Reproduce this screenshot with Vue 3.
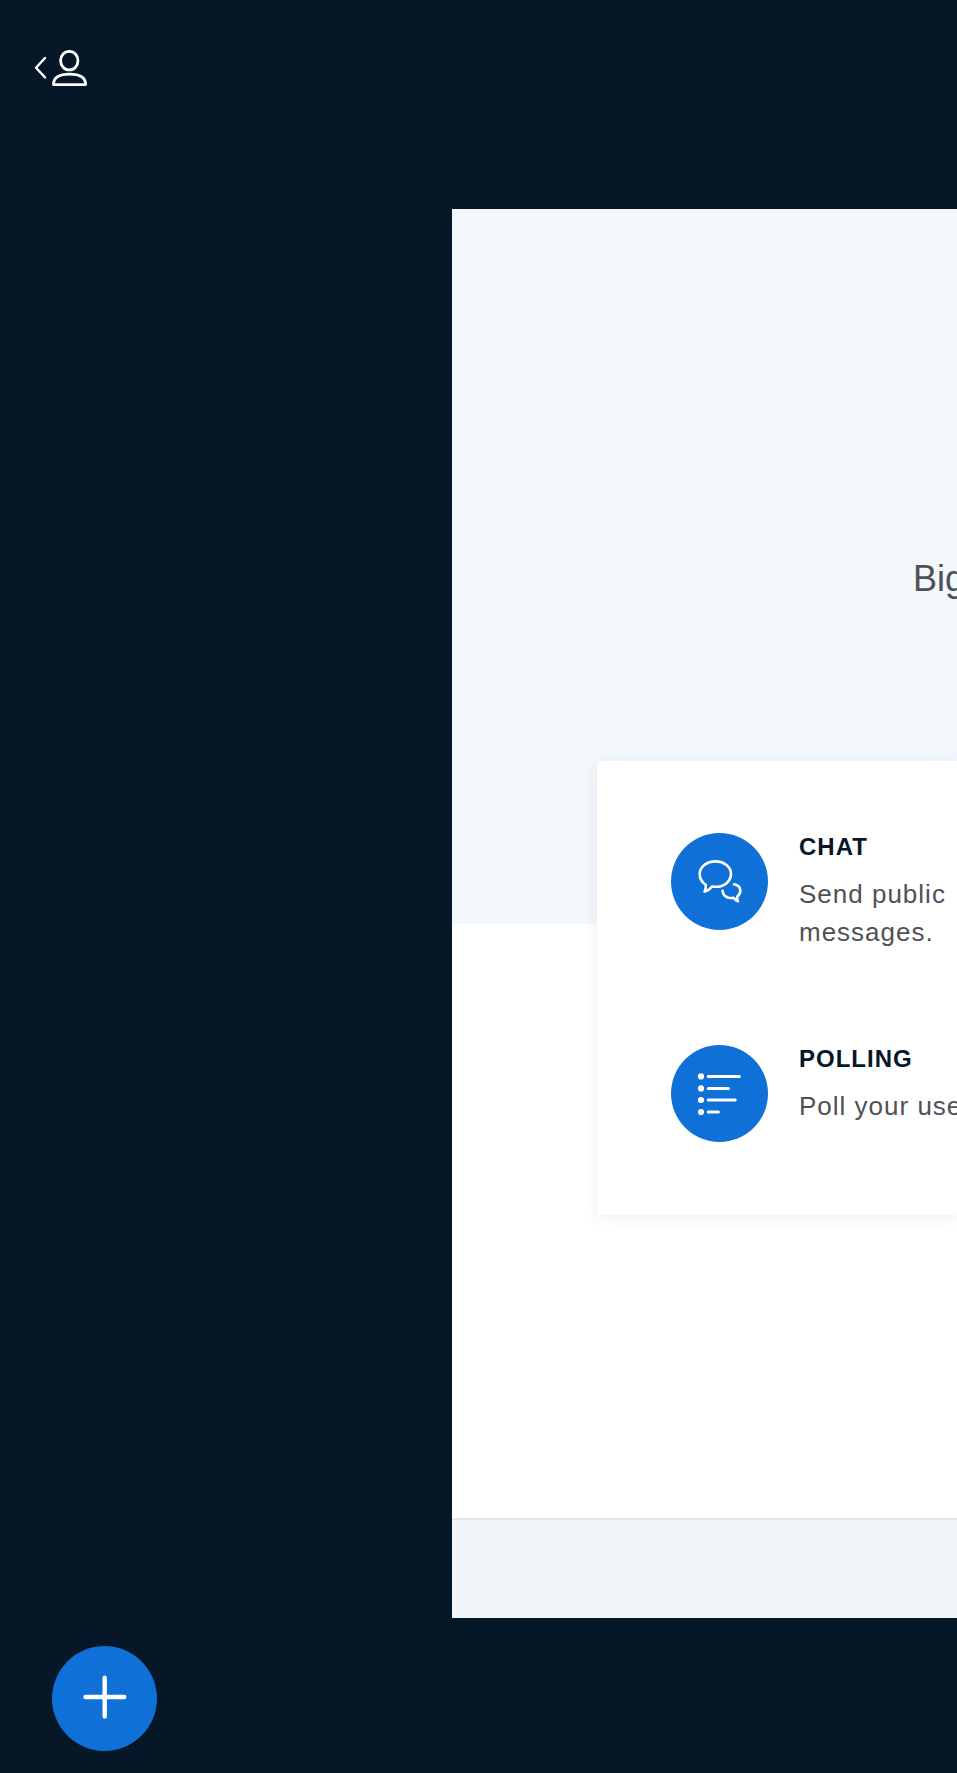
<script setup>
const features = [
  { id: 'chat', title: 'CHAT', text: ['Send public', 'messages.'] },
  { id: 'polling', title: 'POLLING', text: ['Poll your use'] },
]
</script>

<template>
  <div class="page">
    <header class="top-bar">
      <button class="users-toggle" type="button" aria-label="Toggle user list">
        <svg width="54" height="38" viewBox="0 0 54 38" fill="none" stroke="#fff" stroke-linecap="round" stroke-linejoin="round">
          <path d="M11 9 L2 18.7 L11 28.4" stroke-width="2.4" />
          <ellipse cx="35.3" cy="11.6" rx="8.7" ry="9.3" stroke-width="2.8" />
          <path d="M19.5 35.6 C19.5 29 25 25.2 35.5 25.2 C46 25.2 51.6 29 51.6 35.6 Z" stroke-width="2.8" />
        </svg>
      </button>
    </header>

    <main class="slide">
      <section class="hero">
        <p class="intro">Big</p>
      </section>
      <section class="content">
        <div class="card">
          <article v-for="f in features" :key="f.id" class="feature">
            <span class="badge">
              <svg v-if="f.id === 'chat'" width="97" height="97" viewBox="0 0 97 97" fill="none" stroke="#fff" stroke-width="2.6" stroke-linecap="round" stroke-linejoin="round">
                <path d="M34.6 51.6 C30.9 49.2 28.7 45.5 28.7 41.3 C28.7 34 35.6 28.4 44.4 28.4 C53.2 28.4 60 34 60 41.1 C60 48.3 53.2 53.8 44.8 53.8 Q42.8 53.8 41 53.4 Q38.2 57.6 33.6 58.6 Q35.4 55 34.6 51.6 Z" />
                <path d="M63 51.3 C66.8 52 69.3 54.6 69.3 57.8 C69.3 60.2 68.2 62.2 66.3 63.5 Q65.7 65.6 66.9 68.2 Q64.2 67.2 62.8 64.8 C56.6 65.9 51.8 62.9 51.6 57.8" />
              </svg>
              <svg v-else width="97" height="97" viewBox="0 0 97 97" fill="#fff" stroke="#fff" stroke-width="3" stroke-linecap="round">
                <g stroke="none">
                  <circle cx="30" cy="31.4" r="3.1" />
                  <circle cx="30" cy="43.4" r="3.1" />
                  <circle cx="30" cy="55" r="3.1" />
                  <circle cx="30" cy="67" r="3.1" />
                </g>
                <path d="M37.2 31.4 H68.4 M37.2 43.4 H57.4 M37.2 55 H64.2 M37.2 67 H47.4" />
              </svg>
            </span>
            <div class="copy">
              <h2>{{ f.title }}</h2>
              <p><span v-for="line in f.text" :key="line">{{ line }}</span></p>
            </div>
          </article>
        </div>
      </section>
      <footer class="slide-footer"></footer>
    </main>

    <div class="actions">
      <button class="add" type="button" aria-label="Actions">
        <svg width="105" height="105" viewBox="0 0 105 105" fill="none" stroke="#fff" stroke-width="4.4" stroke-linecap="round">
          <path d="M52.7 31.8 V70.4 M33.5 51 H72.2" />
        </svg>
      </button>
    </div>
  </div>
</template>

<style>
body {
  background: #061728;
}
</style>

<style scoped>
.page {
  display: flex;
  flex-direction: column;
  min-height: 100vh;
  overflow: hidden;
  background: #061728;
  font-family: "Liberation Sans", Arial, sans-serif;
}

button {
  padding: 0;
  border: 0;
  cursor: pointer;
}

svg {
  display: block;
}

.top-bar {
  box-sizing: border-box;
  height: 209px;
  padding: 49px 34px;
}

.users-toggle {
  background: transparent;
}

.slide {
  margin-left: 452px;
  background: #fff;
}

.hero {
  box-sizing: border-box;
  height: 715px;
  padding: 349px 0 0 461px;
  background: #f3f8fd;
}

.intro {
  margin: 0;
  color: #4e5157;
  font-size: 36px;
  line-height: 42px;
  white-space: nowrap;
}

.content {
  padding: 0 0 303px 145px;
}

.card {
  position: relative;
  display: flex;
  flex-direction: column;
  gap: 92px;
  margin-top: -163px;
  padding: 70px 0 73px 74px;
  border-radius: 2px 0 0 2px;
  background: #fff;
  box-shadow: 0 2px 18px rgba(6, 23, 40, 0.07);
}

.feature {
  display: flex;
  align-items: flex-start;
  gap: 31px;
}

.badge {
  flex: none;
  margin-top: 2px;
  width: 97px;
  height: 97px;
  border-radius: 50%;
  background: #0f70d7;
}

.copy {
  letter-spacing: 1px;
  white-space: nowrap;
}

h2 {
  margin: 0 0 12px;
  color: #061728;
  font-size: 24px;
  line-height: 32px;
}

.copy p {
  margin: 0;
  color: #4e5157;
  font-size: 26px;
  line-height: 38px;
}

.copy p span {
  display: block;
}

.slide-footer {
  box-sizing: border-box;
  height: 100px;
  border-top: 2px solid #dde7f0;
  background: #f2f6f9;
}

.actions {
  padding: 28px 52px 22px;
}

.add {
  width: 105px;
  height: 105px;
  border-radius: 50%;
  background: #0f70d7;
}
</style>
